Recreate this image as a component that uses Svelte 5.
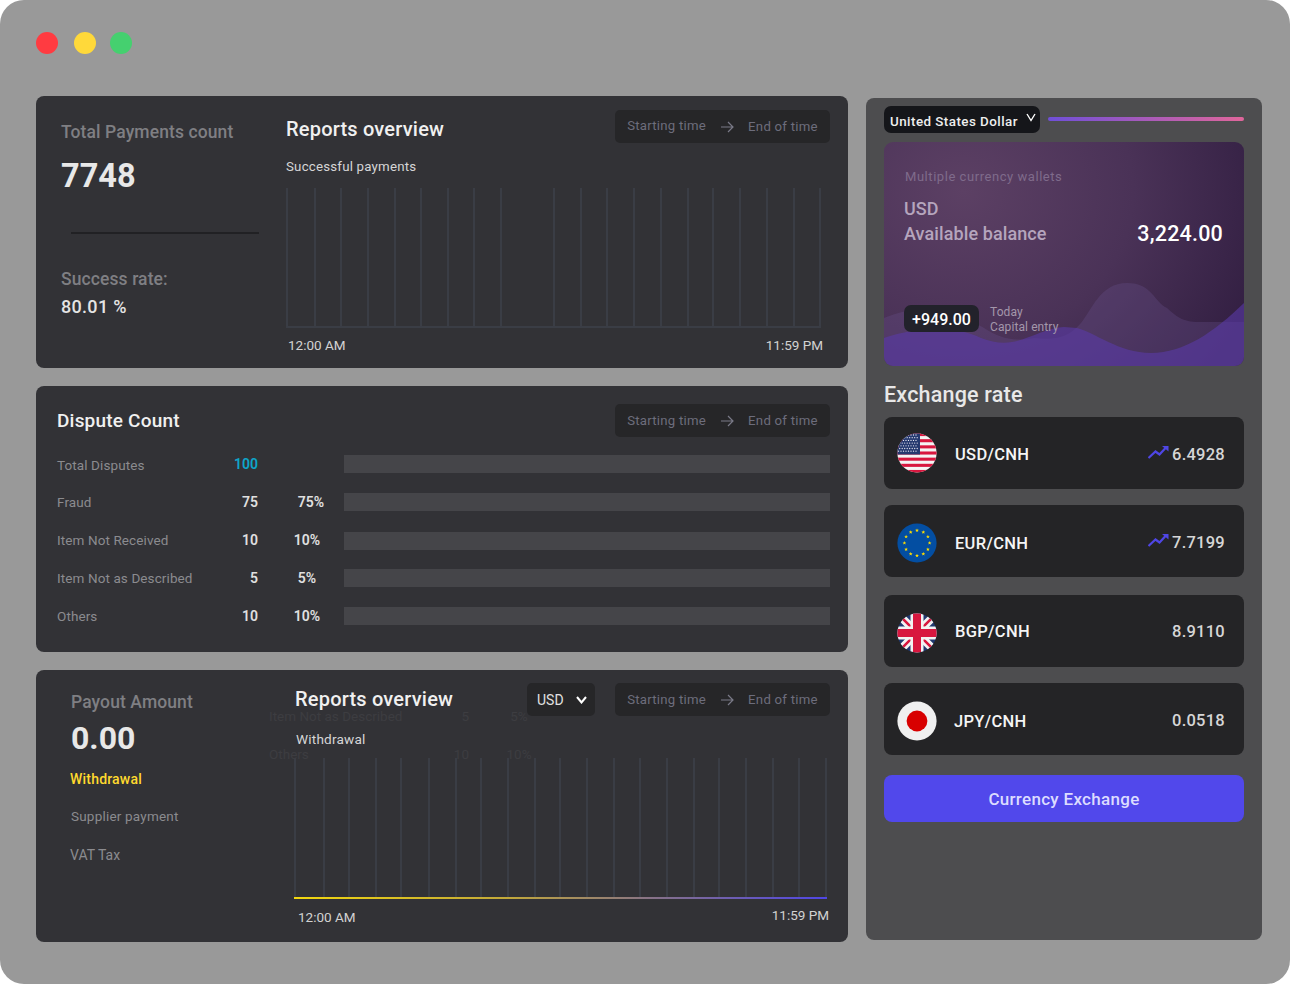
<script>
  const chart1 = [0,28,54,81,108,134,161,187,214,267,294,320,347,374,401,426,453,480,507,533];
  const chart2 = [0,29,54,81,106,134,161,186,213,240,265,292,319,345,372,399,424,451,478,504,531];
  const disputes = [
    { label: 'Total Disputes', count: '100', pct: '', total: true },
    { label: 'Fraud', count: '75', pct: '75%', shift: true },
    { label: 'Item Not Received', count: '10', pct: '10%' },
    { label: 'Item Not as Described', count: '5', pct: '5%' },
    { label: 'Others', count: '10', pct: '10%' }
  ];
  const stars = Array.from({ length: 12 }, (_, i) => {
    const a = (i * Math.PI) / 6;
    return { x: 20 + 12.6 * Math.sin(a), y: 20 - 12.6 * Math.cos(a) };
  });
  const stripes = Array.from({ length: 13 }, (_, i) => i);
  const dots = [];
  for (let r = 0; r < 7; r++) for (let c = 0; c < 8; c++) dots.push({ x: 1.5 + c * 2.5 + (r % 2) * 1.2, y: 2 + r * 2.7 });
  const rates = [
    { flag: 'us', pair: 'USD/CNH', value: '6.4928', up: true },
    { flag: 'eu', pair: 'EUR/CNH', value: '7.7199', up: true },
    { flag: 'uk', pair: 'BGP/CNH', value: '8.9110' },
    { flag: 'jp', pair: 'JPY/CNH', value: '0.0518' }
  ];
</script>

{#snippet picker()}
  <div class="picker">
    <span>Starting time</span>
    <svg width="14" height="12" viewBox="0 0 14 12" fill="none" stroke="#7a7a88" stroke-width="1.2"><path d="M1 6h12M8 1l5 5-5 5"/></svg>
    <span>End of time</span>
  </div>
{/snippet}

{#snippet grid(xs, base)}
  <svg class="chart" width="540" height="141" viewBox="0 0 540 141">
    {#each xs as x}
      <rect x={x} y="0" width="2" height="140" fill="#3a3d45" />
    {/each}
    <rect x="0" y={base ? 139 : 138} width={xs[xs.length - 1] + 2} height="2" fill={base ? 'url(#line)' : '#3a3d45'} />
    <defs>
      <linearGradient id="line">
        <stop offset="0" stop-color="#f2d70f" />
        <stop offset="0.4" stop-color="#c2a83a" />
        <stop offset="0.68" stop-color="#85708a" />
        <stop offset="1" stop-color="#4f46e5" />
      </linearGradient>
    </defs>
  </svg>
{/snippet}

<div class="window">
  <div class="lights">
    <i class="red"></i><i class="yellow"></i><i class="green"></i>
  </div>

  <div class="layout">
    <div class="col">
      <section class="card one">
        <div class="side">
          <h3 class="muted">Total Payments count</h3>
          <div class="big">7748</div>
          <div class="rule"></div>
          <h3 class="muted rate">Success rate:</h3>
          <div class="pct">80.01 %</div>
        </div>
        <div class="main">
          <header class="head">
            <h2>Reports overview</h2>
            {@render picker()}
          </header>
          <p class="sub">Successful payments</p>
          {@render grid(chart1, false)}
          <div class="times"><span>12:00 AM</span><span>11:59 PM</span></div>
        </div>
      </section>

      <section class="card two">
        <header class="head">
          <h2>Dispute Count</h2>
          {@render picker()}
        </header>
        <div class="rows">
          {#each disputes as d}
            <div class="row">
              <span class="lab">{d.label}</span>
              <b class="count" class:total={d.total}>{d.count}</b>
              <b class="share" class:shift={d.shift}>{d.pct}</b>
              <span class="bar"></span>
            </div>
          {/each}
        </div>
      </section>

      <section class="card three">
        <div class="ghost g1"><span>Item Not as Described</span><span class="g-n">5</span><span class="g-p">5%</span></div>
        <div class="ghost g2"><span>Others</span><span class="g-n">10</span><span class="g-p">10%</span></div>
        <div class="side">
          <h3 class="muted">Payout Amount</h3>
          <div class="big">0.00</div>
          <div class="tab active">Withdrawal</div>
          <div class="tab sup">Supplier payment</div>
          <div class="tab vat">VAT Tax</div>
        </div>
        <div class="main">
          <header class="head">
            <h2>Reports overview</h2>
            <div class="tools">
              <div class="usd">USD
                <svg width="11" height="8" viewBox="0 0 11 8" fill="none" stroke="#fff" stroke-width="2"><path d="M1 1l4.5 5.5L10 1"/></svg>
              </div>
              {@render picker()}
            </div>
          </header>
          <p class="sub">Withdrawal</p>
          {@render grid(chart2, true)}
          <div class="times"><span>12:00 AM</span><span class="end">11:59 PM</span></div>
        </div>
      </section>
    </div>

    <aside class="panel">
      <div class="top">
        <div class="select">United States Dollar
          <svg width="10" height="9" viewBox="0 0 10 9" fill="none" stroke="#fff" stroke-width="1.4"><path d="M1 1l4 6.5L9 1"/></svg>
        </div>
        <div class="meter"></div>
      </div>

      <div class="wallet">
        <svg class="waves" width="360" height="224" viewBox="0 0 360 224">
          <path d="M0 176C12 172 20 168 34 169C60 172 85 176 100 186C115 196 130 200 150 196C170 198 183 197 197 181C208 168 216 141 243 141C268 141 270 160 283 166C292 174 298 180 315 180H360V224H0Z" fill="#6a5290" fill-opacity="0.3" />
          <path d="M0 196C12 192 22 189 40 188C62 186 80 188 97 196C108 200 118 202 128 200C145 197 165 185 180 185L193 186C210 190 235 211 267 211C300 211 330 190 360 161V224H0Z" fill="#5a3aa8" fill-opacity="0.6" />
        </svg>
        <p class="w-lab">Multiple currency wallets</p>
        <p class="w-cur">USD</p>
        <div class="w-bal"><span>Available balance</span><b>3,224.00</b></div>
        <div class="w-foot">
          <span class="badge">+949.00</span>
          <span class="note">Today<br />Capital entry</span>
        </div>
      </div>

      <h2 class="ex">Exchange rate</h2>

      <div class="rates">
        {#each rates as r}
          <div class="rate-row">
            <svg class="flag" width="40" height="40" viewBox="0 0 40 40">
              <defs><clipPath id="c-{r.flag}"><circle cx="20" cy="20" r="19.6" /></clipPath></defs>
              <g clip-path="url(#c-{r.flag})">
                {#if r.flag === 'us'}
                  <rect width="40" height="40" fill="#f4f4f4" />
                  {#each stripes as s}
                    {#if s % 2 === 0}<rect x="0" y={s * 3.08} width="40" height="3.08" fill="#d8173f" />{/if}
                  {/each}
                  <rect width="23" height="21.5" fill="#25396f" />
                  {#each dots as d}<circle cx={d.x} cy={d.y} r="0.65" fill="#e8e8f2" />{/each}
                {:else if r.flag === 'eu'}
                  <rect width="40" height="40" fill="#034ea2" />
                  {#each stars as s}
                    <polygon points="0,-1.9 0.55,-0.55 1.9,-0.55 0.85,0.3 1.2,1.6 0,0.85 -1.2,1.6 -0.85,0.3 -1.9,-0.55 -0.55,-0.55" transform="translate({s.x} {s.y})" fill="#ffdd00" />
                  {/each}
                {:else if r.flag === 'uk'}
                  <rect width="40" height="40" fill="#21386f" />
                  <path d="M0 0L40 40M40 0L0 40" stroke="#f2f2f2" stroke-width="8" />
                  <path d="M0 0L40 40M40 0L0 40" stroke="#d8173f" stroke-width="2.6" />
                  <path d="M20 0V40M0 20H40" stroke="#f2f2f2" stroke-width="13" />
                  <path d="M20 0V40M0 20H40" stroke="#d8173f" stroke-width="8" />
                {:else}
                  <rect width="40" height="40" fill="#f0f0f0" />
                  <circle cx="20" cy="20" r="10.4" fill="#d80000" />
                {/if}
              </g>
            </svg>
            <span class="pair" class:jp={r.flag === 'jp'}>{r.pair}</span>
            {#if r.up}
              <svg class="trend" width="21" height="14" viewBox="0 0 21 14" fill="none" stroke="#4f46e5" stroke-width="2.2"><path d="M0.5 13L7.5 6.5L11.5 9.5L18 2.5"/><path d="M14 1H20.5V6.5Z" stroke="none" fill="#4f46e5"/></svg>
            {/if}
            <span class="val">{r.value}</span>
          </div>
        {/each}
      </div>

      <button class="cta">Currency Exchange</button>
    </aside>
  </div>
</div>

<style>
  :global(body) { margin: 0; background: #fff; }
  * { box-sizing: border-box; }
  h2, h3, p { margin: 0; font: inherit; }

  .window {
    width: 1290px; height: 984px; background: #999; border-radius: 24px;
    font-family: Roboto, "Liberation Sans", sans-serif; color: #fff;
    padding: 32px 28px 0 36px; overflow: hidden;
  }
  .lights { display: flex; height: 22px; }
  .lights i { width: 22px; height: 22px; border-radius: 50%; display: block; }
  .red { background: #ff3b41; }
  .yellow { background: #ffd93a; margin-left: 16px; }
  .green { background: #45d06f; margin-left: 14px; }

  .layout { display: grid; grid-template-columns: 812px 396px; column-gap: 18px; margin-top: 42px; align-items: start; }
  .col { display: flex; flex-direction: column; gap: 18px; }

  .card { background: #323236; border-radius: 8px; position: relative; }
  .one, .three { display: grid; height: 272px; }
  .one { grid-template-columns: 250px 544px; }
  .three { grid-template-columns: 258px 536px; }
  .two { height: 266px; padding: 18px 18px 0 21px; }

  .head { display: flex; justify-content: space-between; align-items: flex-start; height: 33px; }
  .head h2 { font-size: 20px; font-weight: 500; line-height: 24px; color: #f0f0f0; padding-top: 7px; letter-spacing: 0.2px; }
  .muted { font-size: 17.5px; font-weight: 500; line-height: 24px; color: #7f7f83; letter-spacing: 0.1px; }

  .side { padding-left: 25px; padding-top: 24px; }
  .big { font-size: 32.5px; font-weight: 700; line-height: 40px; color: #e8e8e8; margin-top: 12px; }
  .rule { height: 2px; width: 188px; margin: 36px 0 0 10px; background: #212124; }
  .rate { margin-top: 33px; }
  .pct { font-size: 18px; font-weight: 500; line-height: 24px; color: #e4e4e4; margin-top: 4px; letter-spacing: 0.3px; }

  .main { padding-top: 14px; }
  .sub { font-size: 13.3px; line-height: 18px; color: #d6d6d6; margin-top: 15px; letter-spacing: 0.2px; }
  .chart { display: block; margin-top: 12px; }
  .times { display: flex; justify-content: space-between; font-size: 13.5px; line-height: 18px; color: #d2d2d2; margin-top: 7px; padding: 0 7px 0 2px; }

  .picker {
    width: 215px; height: 33px; background: #262628; border-radius: 5px;
    display: flex; align-items: center; justify-content: center; gap: 14px;
    font-size: 13.2px; letter-spacing: 0.25px; color: #6d6d7c;
  }
  .one .picker span:first-child { margin-top: -3px; }

  .two .head h2 { font-size: 19px; padding-top: 5px; }
  .rows { margin-top: 18px; display: flex; flex-direction: column; }
  .row { display: grid; grid-template-columns: 163px 38px 86px 486px; height: 38px; align-items: start; }
  .row:nth-child(3) { margin-top: 1px; }
  .row:nth-child(4) { margin-top: -1px; }
  .row:nth-child(3) > :not(.bar) { margin-top: -1px; }
  .lab { font-size: 13.5px; line-height: 18px; color: #8b8b8f; letter-spacing: 0.1px; }
  .row:first-child .lab { padding-top: 1px; }
  .count { text-align: right; font-size: 14px; font-weight: 600; line-height: 18px; color: #e0e0e0; }
  .total { color: #0ea5c9; }
  .share { text-align: center; font-size: 14px; font-weight: 600; line-height: 18px; color: #e0e0e0; padding-left: 12px; }
  .shift { padding-left: 20px; }
  .bar { height: 18px; background: #454549; }

  .three .side { padding-left: 35px; padding-top: 20px; }
  .three .big { margin-top: 4px; font-size: 32px; }
  .tab { font-size: 14px; line-height: 20px; color: #8b8b8f; margin-left: -1px; }
  .active { color: #ffd92e; font-weight: 500; margin-top: 11px; letter-spacing: 0.2px; }
  .sup { margin-top: 17px; padding-left: 1px; letter-spacing: 0.2px; font-size: 13.5px; }
  .vat { margin-top: 19px; }
  .three .main { padding-top: 13px; }
  .three .head h2 { padding-top: 5px; line-height: 22px; padding-left: 1px; }
  .three .sub { margin-top: 14px; padding-left: 2px; font-size: 13.6px; color: #d6d6d6; }
  .three .chart { margin-top: 10px; }
  .three .times { padding: 0 1px 0 4px; margin-top: 9px; }
  .end { margin-top: -2px; }
  .tools { display: flex; gap: 20px; }
  .usd {
    width: 68px; height: 33px; background: #262628; border-radius: 5px; display: flex; align-items: center;
    justify-content: space-between; padding: 0 8px 0 10px; font-size: 14px; color: #e0e0e0;
  }

  .ghost { position: absolute; left: 233px; display: flex; font-size: 13.5px; line-height: 12px; color: #3d3d41; }
  .ghost span:first-child { width: 160px; }
  .g1 { top: 40px; }
  .g2 { top: 78px; }
  .g-n { width: 40px; text-align: right; }
  .g-p { width: 100px; text-align: center; }

  .panel { height: 842px; margin-top: 2px; background: #4d4d4f; border-radius: 8px; padding: 8px 18px 0; }
  .top { display: flex; gap: 8px; align-items: flex-start; }
  .select {
    width: 156px; height: 27px; background: #15161a; border-radius: 7px; display: flex; align-items: center;
    justify-content: space-between; padding: 3px 4px 0 6px; font-size: 13.4px; font-weight: 500; color: #eee; letter-spacing: 0.45px;
  }
  .select svg { margin-top: -7px; }
  .meter { width: 196px; height: 4px; margin-top: 11px; border-radius: 2px; background: linear-gradient(90deg, #6f4fd8, #e0669b); }

  .wallet {
    position: relative; height: 224px; margin-top: 9px; border-radius: 9px; overflow: hidden; padding: 26px 21px 0 20px;
    background: radial-gradient(ellipse 340px 300px at 22% 22%, #5c4064 0%, #4a3257 50%, #2f1c3f 100%);
  }
  .waves { position: absolute; left: 0; top: 0; }
  .wallet p, .w-bal, .w-foot { position: relative; }
  .w-lab { font-size: 13px; line-height: 18px; color: #7f6b8b; letter-spacing: 0.55px; padding-left: 1px; }
  .w-cur { font-size: 18px; font-weight: 500; line-height: 22px; color: #b5a5bd; margin-top: 12px; }
  .w-bal { display: flex; justify-content: space-between; align-items: center; margin-top: -1px; height: 28px; }
  .w-bal span { font-size: 18px; font-weight: 500; color: #b5a5bd; letter-spacing: 0.1px; }
  .w-bal b { font-size: 21.5px; font-weight: 500; color: #fff; letter-spacing: 0.2px; }
  .w-foot { display: flex; margin-top: 58px; gap: 11px; align-items: flex-start; }
  .badge { width: 75px; height: 27px; background: #22222b; border-radius: 7px; display: flex; align-items: center; justify-content: center; font-size: 16px; font-weight: 500; padding-top: 2px; }
  .note { font-size: 12px; line-height: 15px; color: #a497ab; letter-spacing: 0.1px; }

  .ex { font-size: 21.5px; font-weight: 500; line-height: 28px; color: #e8e8e8; margin-top: 15px; letter-spacing: 0.2px; }

  .rates { display: flex; flex-direction: column; gap: 16px; margin-top: 8px; }
  .rate-row { height: 72px; background: #242426; border-radius: 8px; display: flex; align-items: center; padding: 0 19px 0 13px; }
  .rate-row:nth-child(3) { margin-top: 2px; }
  .rate-row:not(:first-child) .flag { margin-top: 4px; }
  .flag { flex: none; }
  .pair { font-size: 16.5px; font-weight: 500; color: #f5f5f5; margin-left: 18px; margin-right: auto; letter-spacing: 0.3px; padding-top: 2px; }
  .rate-row:nth-child(2) .pair { padding-top: 4px; }
  .rate-row:nth-child(3) .pair, .rate-row:nth-child(3) .val { padding-top: 0; }
  .pair.jp { margin-left: 17px; padding-top: 4px; }
  .val { font-size: 16.5px; font-weight: 500; color: #d6d6d6; letter-spacing: 0.25px; padding-top: 2px; }
  .trend { margin-right: 3px; margin-top: -2px; }

  .cta {
    display: block; width: 360px; height: 47px; margin-top: 20px; border: 0; border-radius: 8px; background: #5148eb;
    color: #dcdcff; font: 500 17px Roboto, sans-serif; letter-spacing: 0.3px;
  }
</style>
